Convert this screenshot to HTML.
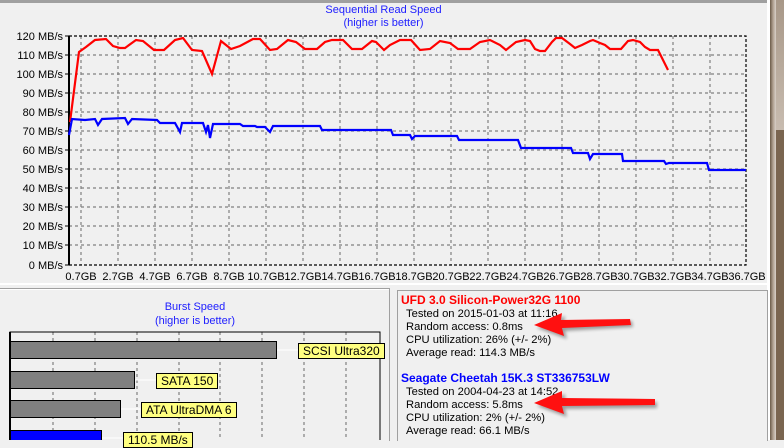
<!DOCTYPE html>
<html><head><meta charset="utf-8"><style>
body{margin:0;width:784px;height:440px;overflow:hidden;background:#f0f0f0;font-family:"Liberation Sans",Arial,sans-serif;position:relative}
.a{position:absolute}
.lbl{position:absolute;background:#ffff80;border:1px solid #000;font-size:12px;line-height:14px;padding:0 4px;white-space:nowrap}
.info{position:absolute;font-size:12px;white-space:nowrap;line-height:13px}
.sm{font-size:11.2px}
</style></head><body>
<div class="a" style="left:0;top:0;width:767px;height:3px;background:#a0a0a0"></div>
<div class="a" style="left:767px;top:0;width:3px;height:440px;background:#fff"></div>
<div class="a" style="left:770px;top:0;width:6px;height:440px;background:linear-gradient(90deg,#6a5a48,#b0a090,#d8d0c8)"></div>
<div class="a" style="left:776px;top:0;width:8px;height:130px;background:linear-gradient(180deg,#a89888,#c8bcb0)"></div>
<div class="a" style="left:776px;top:130px;width:8px;height:310px;background:#7a6550"></div>
<div class="a" style="left:0;top:283px;width:767px;height:2px;background:#fff"></div>

<div class="a" style="left:0;top:4px;width:767px;text-align:center;font-size:11px;color:#2020ff;line-height:13px">Sequential Read Speed<br>(higher is better)</div>

<svg class="a" style="left:0;top:0" width="767" height="290">
<g stroke="#808080" stroke-dasharray="3,3" stroke-width="1.2" fill="none">
<path d="M69 55H746M69 74H746M69 93H746M69 112H746M69 131H746M69 150H746M69 169H746M69 188H746M69 207H746M69 226H746M69 245H746"/>
<path d="M81 36V265M118 36V265M155 36V265M192 36V265M229 36V265M266 36V265M303 36V265M340 36V265M377 36V265M414 36V265M451 36V265M488 36V265M525 36V265M562 36V265M599 36V265M636 36V265M673 36V265M710 36V265"/>
</g>
<path d="M69 36H746V265H69Z" fill="none" stroke="#000" stroke-dasharray="3,2" stroke-width="1.2"/>
<path d="M69 36V265" stroke="#000" stroke-width="2"/>
<g stroke="#000" stroke-width="1"><path d="M65 36H69M65 55H69M65 74H69M65 93H69M65 112H69M65 131H69M65 150H69M65 169H69M65 188H69M65 207H69M65 226H69M65 245H69M65 265H69"/></g>
<polyline fill="none" stroke="#ff0000" stroke-width="2.2" points="70,122 79,52 86,47 95,40 106,39 113,46 120,48 125,48 136,40 143,41 154,50 164,50 175,40 183,38 192,50 202,51 212,74 221,41 231,49 240,46 253,39 260,39 270,50 277,49 288,40 296,42 305,49 317,49 325,42 332,40 343,40 352,49 362,49 372,41 376,42 384,50 390,45 400,40 411,40 420,50 430,49 440,41 450,43 458,49 470,49 480,42 490,40 500,45 506,50 516,42 525,40 530,41 535,49 540,51 545,51 552,42 556,38 562,38 570,44 575,48 582,45 590,41 593,40 600,43 605,45 610,49 621,49 628,41 633,40 640,42 645,47 650,50 658,50 668,70"/>
<polyline fill="none" stroke="#0000ff" stroke-width="2.2" points="69,135 72,119 85,120 95,119 98,125 102,119 125,118 128,124 132,119 157,120 160,123 175,123 180,132 182,123 203,123 206,132 208,125 210,138 213,124 240,124 243,126 255,126 257,127 265,127 270,132 273,126 320,126 322,130 391,130 393,135 410,135 412,139 415,136 457,136 459,140 518,140 521,148 571,148 573,153 588,153 590,159 593,154 622,154 623,161 664,161 666,164 669,163 707,163 709,170 746,170"/>
<g font-size="11" fill="#000" text-anchor="end" font-family="Liberation Sans,Arial,sans-serif">
<text x="63" y="40">120 MB/s</text><text x="63" y="59">110 MB/s</text><text x="63" y="78">100 MB/s</text><text x="63" y="97">90 MB/s</text><text x="63" y="116">80 MB/s</text><text x="63" y="135">70 MB/s</text><text x="63" y="154">60 MB/s</text><text x="63" y="173">50 MB/s</text><text x="63" y="192">40 MB/s</text><text x="63" y="211">30 MB/s</text><text x="63" y="230">20 MB/s</text><text x="63" y="249">10 MB/s</text><text x="63" y="269">0 MB/s</text>
</g>
<g font-size="11" fill="#000" text-anchor="middle" font-family="Liberation Sans,Arial,sans-serif">
<text x="81" y="280">0.7GB</text><text x="118" y="280">2.7GB</text><text x="155" y="280">4.7GB</text><text x="192" y="280">6.7GB</text><text x="229" y="280">8.7GB</text><text x="266" y="280">10.7GB</text><text x="303" y="280">12.7GB</text><text x="340" y="280">14.7GB</text><text x="377" y="280">16.7GB</text><text x="414" y="280">18.7GB</text><text x="451" y="280">20.7GB</text><text x="488" y="280">22.7GB</text><text x="525" y="280">24.7GB</text><text x="562" y="280">26.7GB</text><text x="599" y="280">28.7GB</text><text x="636" y="280">30.7GB</text><text x="673" y="280">32.7GB</text><text x="710" y="280">34.7GB</text><text x="747" y="280">36.7GB</text>
</g>
</svg>

<div class="a" style="left:0;top:288px;width:389px;height:152px;border-top:1px solid #a0a0a0;border-right:1px solid #a0a0a0;box-shadow:inset 0 1px 0 #fff"></div>
<div class="a" style="left:0;top:300px;width:390px;text-align:center;font-size:11px;color:#2020ff;line-height:14px">Burst Speed<br>(higher is better)</div>
<svg class="a" style="left:0;top:330px" width="390" height="110">
<g stroke="#808080" stroke-dasharray="3,3" stroke-width="1.2"><path d="M53 2V110M95 2V110M137 2V110M179 2V110M220 2V110M262 2V110M304 2V110M346 2V110"/></g>
<path d="M10 110V2H380V110" fill="none" stroke="#000" stroke-width="1"/>
<path d="M10 2V110" stroke="#000" stroke-width="2"/>
<g stroke="#fff"><path d="M277 20H298M135 50H156M120 79H141M102 108H123"/></g>
<rect x="10.5" y="11.5" width="266" height="17" fill="#808080" stroke="#000"/>
<rect x="10.5" y="41.5" width="124" height="17" fill="#808080" stroke="#000"/>
<rect x="10.5" y="70.5" width="110" height="17" fill="#808080" stroke="#000"/>
<rect x="10.5" y="100.5" width="91" height="17" fill="#0000ff" stroke="#000"/>
</svg>
<div class="lbl" style="left:298px;top:343px">SCSI Ultra320</div>
<div class="lbl" style="left:156px;top:373px">SATA 150</div>
<div class="lbl" style="left:141px;top:402px">ATA UltraDMA 6</div>
<div class="lbl" style="left:123px;top:432px">110.5 MB/s</div>

<div class="a" style="left:397px;top:290px;width:369px;height:150px;border-top:1px solid #a0a0a0;border-left:1px solid #a0a0a0;border-right:1px solid #a0a0a0"></div>
<div class="info" style="left:401px;top:294px;color:#ff0000;font-weight:bold">UFD 3.0 Silicon-Power32G 1100</div>
<div class="info sm" style="left:406px;top:308px">Tested on 2015-01-03 at 11:16<br>Random access: 0.8ms<br>CPU utilization: 26% (+/- 2%)<br>Average read: 114.3 MB/s</div>
<div class="info" style="left:401px;top:372px;color:#0000ff;font-weight:bold">Seagate Cheetah 15K.3 ST336753LW</div>
<div class="info sm" style="left:406px;top:386px">Tested on 2004-04-23 at 14:52<br>Random access: 5.8ms<br>CPU utilization: 2% (+/- 2%)<br>Average read: 66.1 MB/s</div>
<svg class="a" style="left:520px;top:305px" width="150" height="115">
<defs><filter id="s"><feGaussianBlur stdDeviation="1.5"/></filter></defs>
<g fill="#000" opacity="0.35" filter="url(#s)">
<polygon points="17,23 45,11 44,18 112,16 113,22 45,26 47,34"/>
<polygon points="17,101 45,89 45,96 137,97 137,103 45,104 47,112"/>
</g>
<g fill="#ff1010">
<polygon points="14,20 42,8 41,15 110,14 111,20 42,23 44,31"/>
<polygon points="14,98 42,86 42,93 135,94 135,100 42,101 44,109"/>
</g>
</svg>
</body></html>
